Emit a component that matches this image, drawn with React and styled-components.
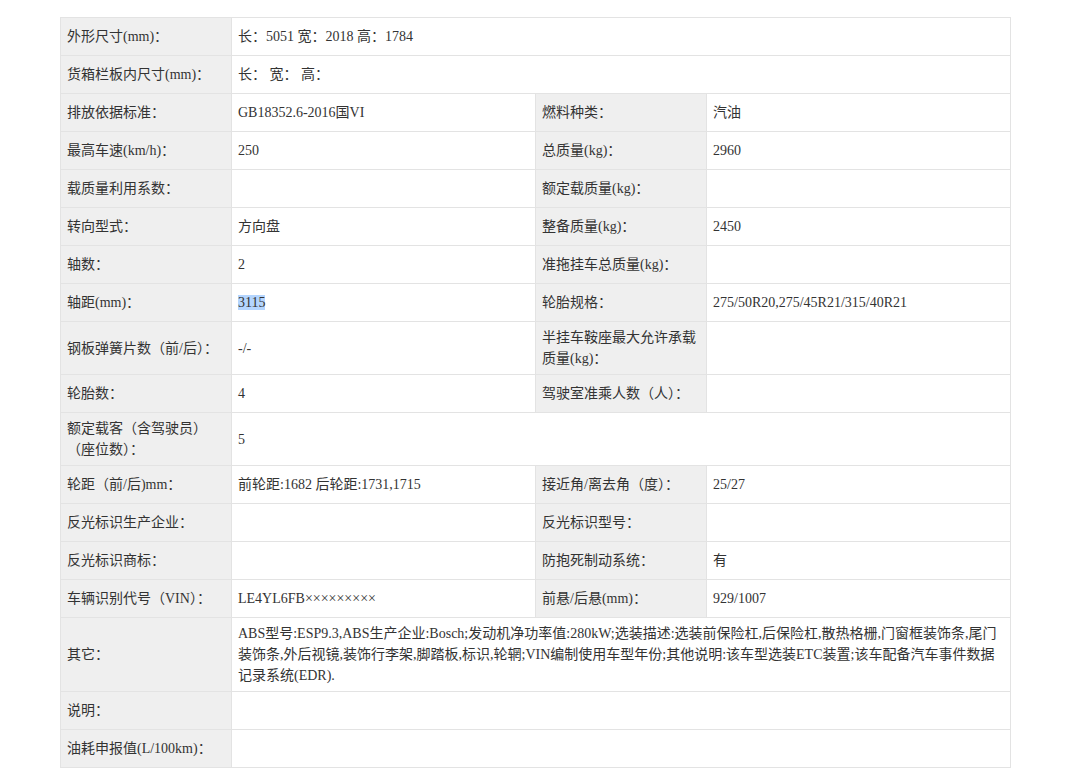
import styled, { createGlobalStyle } from "styled-components";

const GlobalStyle = createGlobalStyle`
  body {
    margin: 0;
    background: #fff;
    font-family: "Liberation Serif", "Noto Sans CJK SC", serif;
    color: #333;
  }
`;

const Page = styled.div`
  padding: 17px 0 0 60px;
`;

const Table = styled.table`
  width: 950px;
  border-collapse: collapse;
  table-layout: fixed;
  font-size: 14px;
  line-height: 21px;
`;

const Row = styled.tr`
  height: 38px;
`;

const Label = styled.td`
  background: #efefef;
  border: 1px solid #e3e3e3;
  padding: 5px 6px;
  vertical-align: middle;
  color: #333;
`;

const Value = styled.td`
  background: #fff;
  border: 1px solid #e3e3e3;
  padding: 5px 6px;
  vertical-align: middle;
  color: #333;
`;

const Mark = styled.span`
  background: #b4d5fe;
`;

const rows = [
  { l: "外形尺寸(mm)：", v: "长：5051 宽：2018 高：1784", full: true },
  { l: "货箱栏板内尺寸(mm)：", v: "长： 宽： 高：", full: true },
  { l: "排放依据标准：", v: "GB18352.6-2016国VI", l2: "燃料种类：", v2: "汽油" },
  { l: "最高车速(km/h)：", v: "250", l2: "总质量(kg)：", v2: "2960" },
  { l: "载质量利用系数：", v: "", l2: "额定载质量(kg)：", v2: "" },
  { l: "转向型式：", v: "方向盘", l2: "整备质量(kg)：", v2: "2450" },
  { l: "轴数：", v: "2", l2: "准拖挂车总质量(kg)：", v2: "" },
  { l: "轴距(mm)：", v: <Mark>3115</Mark>, l2: "轮胎规格：", v2: "275/50R20,275/45R21/315/40R21" },
  { l: "钢板弹簧片数（前/后）：", v: "-/-", l2: "半挂车鞍座最大允许承载质量(kg)：", v2: "" },
  { l: "轮胎数：", v: "4", l2: "驾驶室准乘人数（人）：", v2: "" },
  { l: "额定载客（含驾驶员）（座位数）：", v: "5", full: true },
  { l: "轮距（前/后)mm：", v: "前轮距:1682 后轮距:1731,1715", l2: "接近角/离去角（度）：", v2: "25/27" },
  { l: "反光标识生产企业：", v: "", l2: "反光标识型号：", v2: "" },
  { l: "反光标识商标：", v: "", l2: "防抱死制动系统：", v2: "有" },
  { l: "车辆识别代号（VIN）：", v: "LE4YL6FB×××××××××", l2: "前悬/后悬(mm)：", v2: "929/1007" },
  {
    l: "其它：",
    v: "ABS型号:ESP9.3,ABS生产企业:Bosch;发动机净功率值:280kW;选装描述:选装前保险杠,后保险杠,散热格栅,门窗框装饰条,尾门装饰条,外后视镜,装饰行李架,脚踏板,标识,轮辋;VIN编制使用车型年份;其他说明:该车型选装ETC装置;该车配备汽车事件数据记录系统(EDR).",
    full: true,
  },
  { l: "说明：", v: "", full: true },
  { l: "油耗申报值(L/100km)：", v: "", full: true },
];

export default function App() {
  return (
    <Page>
      <GlobalStyle />
      <Table>
        <colgroup>
          <col style={{ width: 171 }} />
          <col style={{ width: 304 }} />
          <col style={{ width: 171 }} />
          <col style={{ width: 304 }} />
        </colgroup>
        <tbody>
          {rows.map((r, i) => (
            <Row key={i}>
              <Label>{r.l}</Label>
              {r.full ? (
                <Value colSpan={3}>{r.v}</Value>
              ) : (
                <>
                  <Value>{r.v}</Value>
                  <Label>{r.l2}</Label>
                  <Value>{r.v2}</Value>
                </>
              )}
            </Row>
          ))}
        </tbody>
      </Table>
    </Page>
  );
}
